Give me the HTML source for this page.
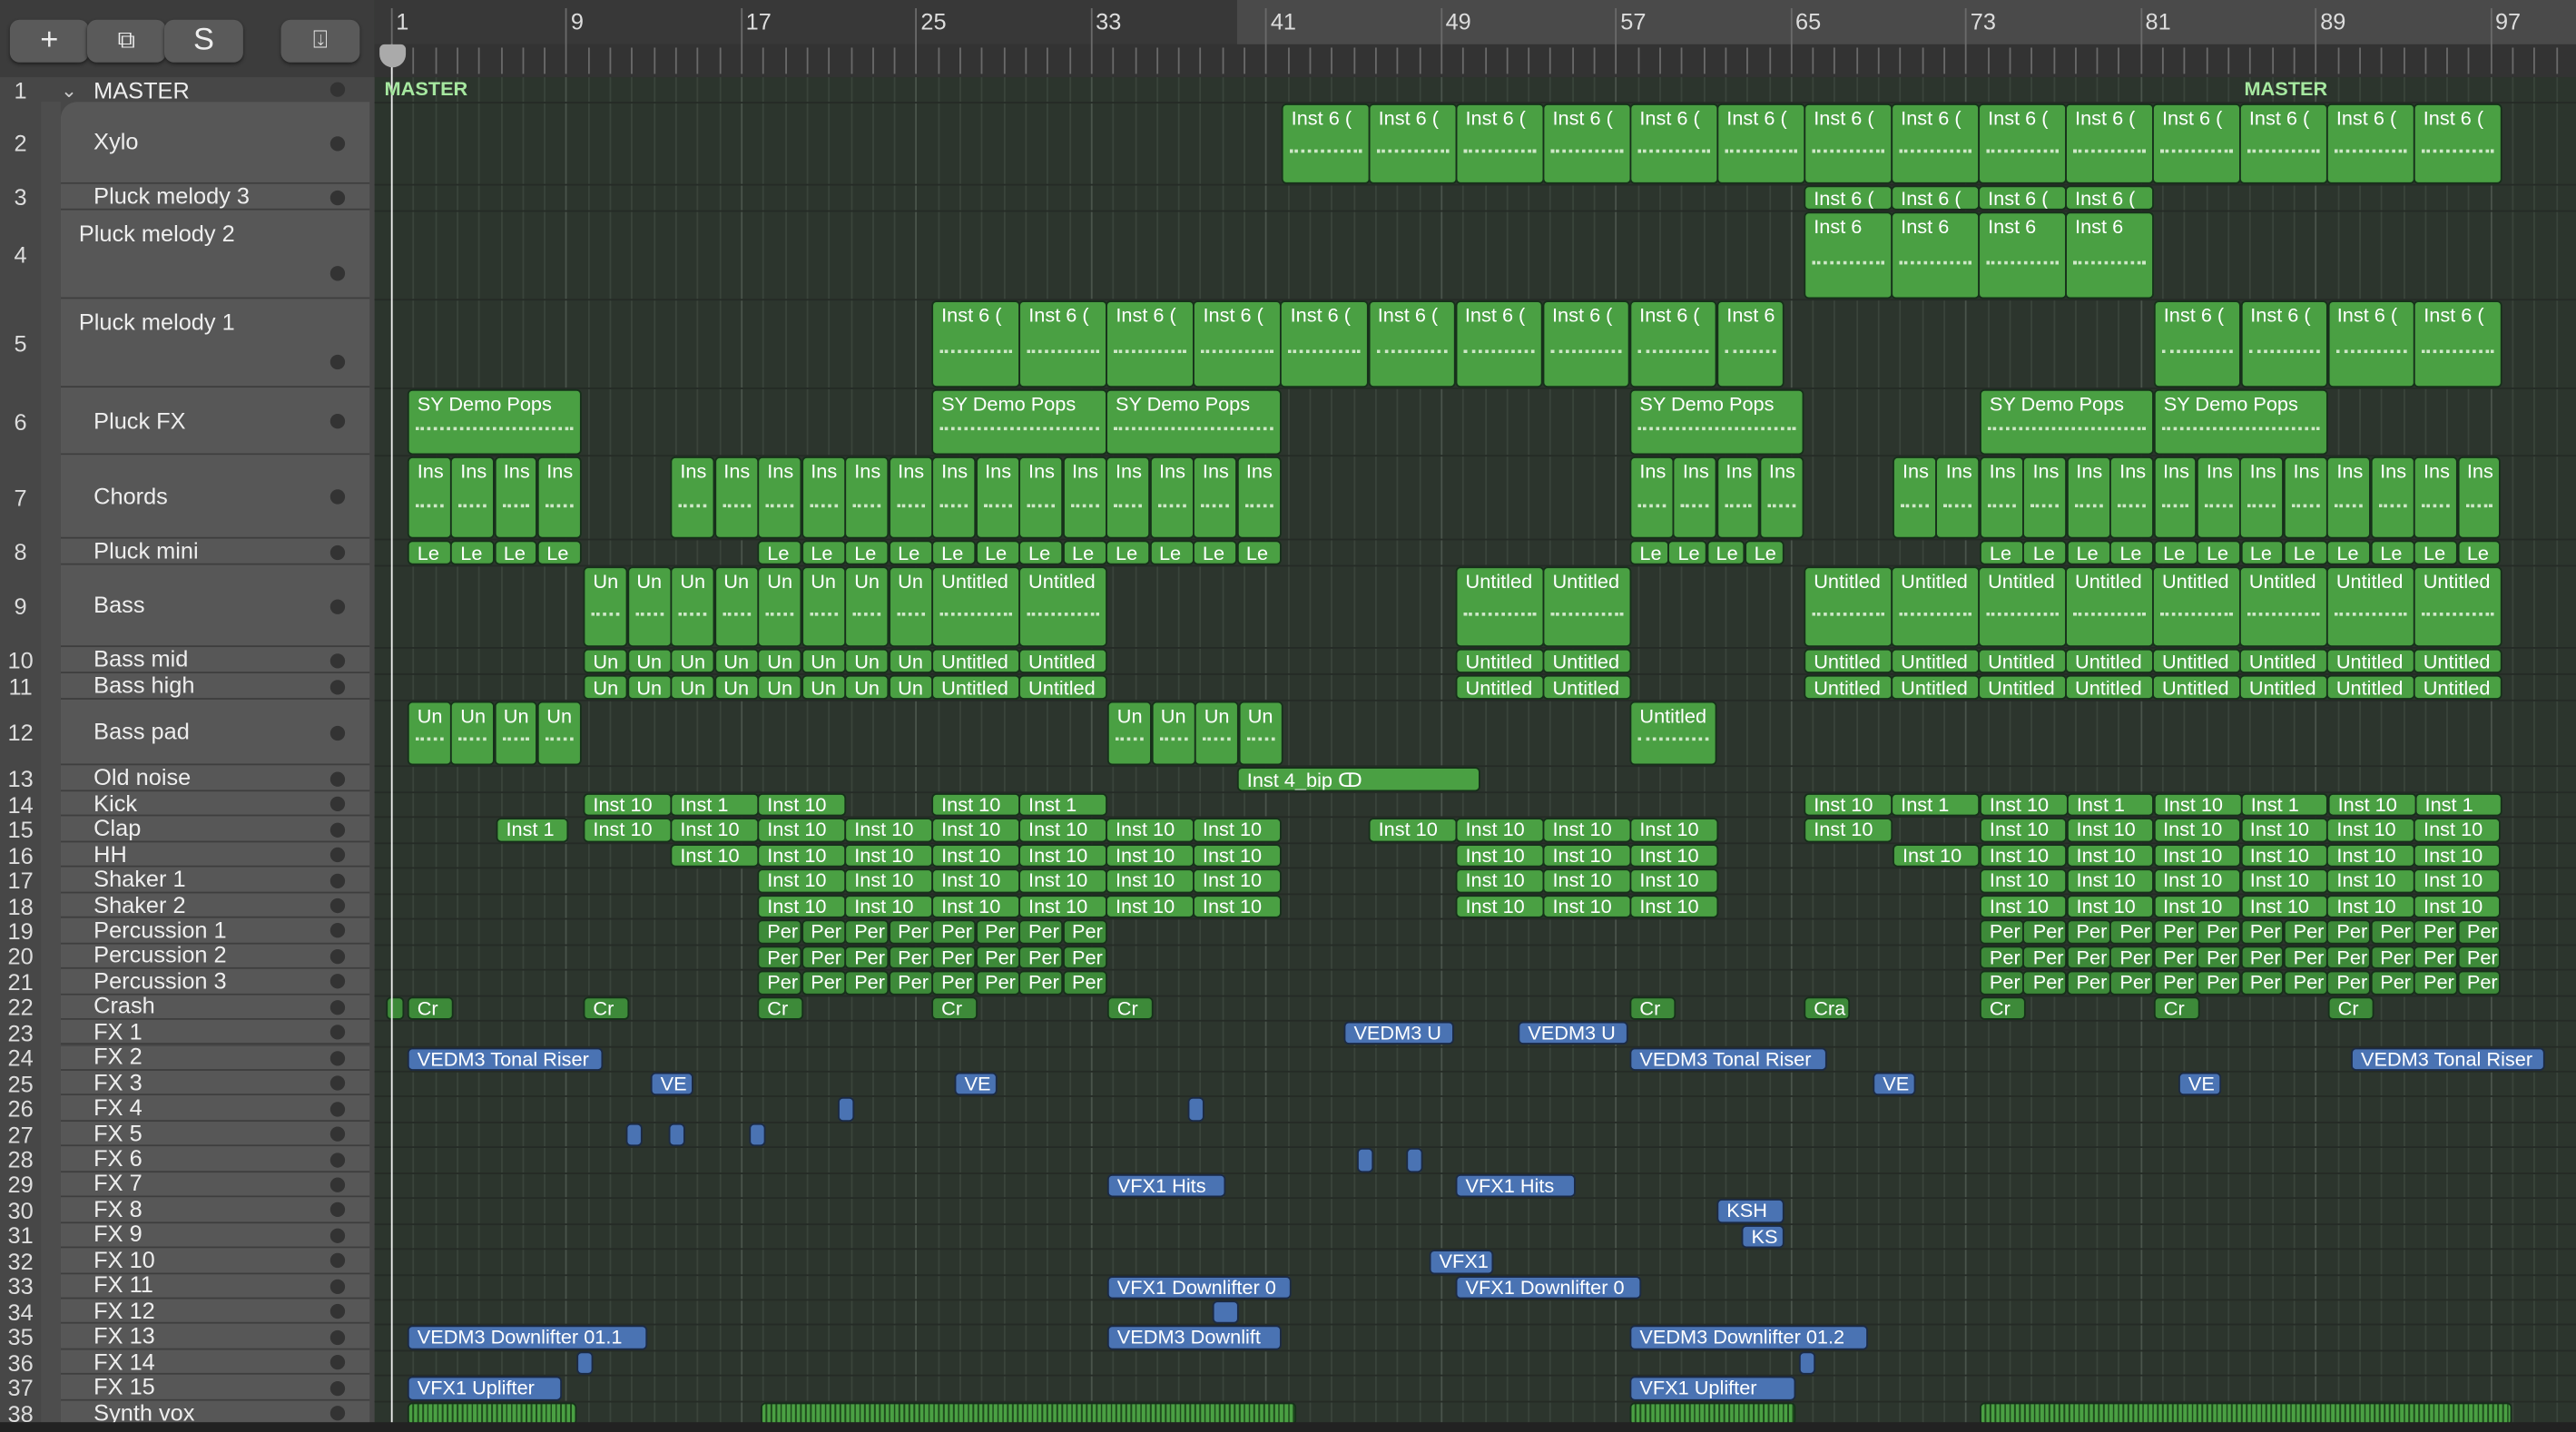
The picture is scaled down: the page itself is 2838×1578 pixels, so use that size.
<!DOCTYPE html>
<html><head><meta charset="utf-8"><style>
html,body{margin:0;padding:0;background:#2a2a2a;overflow:hidden;width:2838px;height:1578px}
#w{position:absolute;left:0;top:0;width:1568px;height:872px;transform:scale(1.81,1.8097);transform-origin:0 0;font-family:"Liberation Sans",sans-serif;background:#2c352d;overflow:hidden}
.a{position:absolute}
.btn{position:absolute;top:12px;width:48px;height:26px;border-radius:6px;background:#5a5a5a;color:#eee;font-size:19px;text-align:center;line-height:26px;box-shadow:0 1px 2px #222}
.num{position:absolute;left:0;width:25px;text-align:center;color:#ddd;font-size:14px}
.hd{position:absolute;left:37px;width:188px;background:#575757;border-bottom:1px solid #3e3e3e;box-sizing:border-box}
.nm{position:absolute;left:20px;color:#eee;font-size:14px;white-space:nowrap}
.dot{position:absolute;left:164px;width:9px;height:9px;border-radius:50%;background:#333}
.r{position:absolute;box-sizing:border-box;border:1px solid #16301a;border-radius:3px;background:#4aa043;color:#fff;font-size:12px;overflow:hidden;white-space:nowrap;padding-left:5px;line-height:13px}
.b{background:#4a73b3;border-color:#1b2a44}
.p{background:#3d8a39}
.g{position:absolute;top:47px;bottom:0;width:1px;background:#3a443b}
.rl{position:absolute;left:228px;right:0;height:1px;background:#252b26}
.tick{position:absolute;top:29px;width:1px;height:16px;background:#6a6a6a}
.rn{position:absolute;top:5px;color:#ddd;font-size:14px}
</style></head><body><div id="w">
<div class="a" style="left:0;top:0;width:228px;height:47px;background:#3c3c3c"></div>
<div class="btn" style="left:6px">+</div>
<div class="btn" style="left:53px;font-size:15px">⧉</div>
<div class="btn" style="left:100px">S</div>
<div class="btn" style="left:171px;font-size:15px">⍗</div>
<div class="a" style="left:228px;top:0;right:0;height:27px;background:#383838"></div>
<div class="a" style="left:753px;top:0;right:0;height:27px;background:#4a4a4a"></div>
<div class="a" style="left:228px;top:27px;right:0;height:20px;background:#333"></div>
<div class="a" style="left:0;top:47px;width:228px;height:825px;background:#474747"></div>
<div class="a" style="left:25px;top:62px;width:12px;height:810px;background:#4d4d4d"></div>
<div id="c"></div>
<div class="a" style="left:238px;top:27px;width:1px;height:845px;background:#eee"></div>
<div class="a" style="left:231px;top:27px;width:16px;height:14px;background:#aaa;border-radius:3px 3px 8px 8px"></div>
<div class="a" style="left:234px;top:47px;color:#a6e8a0;font-size:12px;font-weight:bold">MASTER</div>
<div class="a" style="left:1366px;top:47px;color:#a6e8a0;font-size:12px;font-weight:bold">MASTER</div>
<div class="a" style="left:0;top:866px;width:1568px;height:6px;background:#222"></div>
</div>
<script>
var c=document.getElementById('c'),h='';
for(var i=0;i<=100;i++){var x=238+i*13.31;h+='<div class="g" style="left:'+x+'px;'+(i%8==0?'background:#4a544b':'')+'"></div>';h+='<div class="tick" style="left:'+x+'px;'+(i%8==0?'top:5px;height:40px':'')+'"></div>';if(i%8==0)h+='<div class="rn" style="left:'+(x+3)+'px">'+(i+1)+'</div>';}
var rows=[[47,62,'MASTER'],[62,112,'Xylo'],[112,128,'Pluck melody 3'],[128,182,'Pluck melody 2'],[182,236,'Pluck melody 1'],[236,277,'Pluck FX'],[277,328,'Chords'],[328,344,'Pluck mini'],[344,394,'Bass'],[394,410,'Bass mid'],[410,426,'Bass high'],[426,466,'Bass pad'],[466,482,'Old noise']];
var nm=['Kick','Clap','HH','Shaker 1','Shaker 2','Percussion 1','Percussion 2','Percussion 3','Crash','FX 1','FX 2','FX 3','FX 4','FX 5','FX 6','FX 7','FX 8','FX 9','FX 10','FX 11','FX 12','FX 13','FX 14','FX 15','Synth vox'];
for(var k=0;k<25;k++){var t=482+k*15.45;rows.push([t,t+15.45,nm[k]]);}
rows.forEach(function(r,i){var t=r[0],hh=r[1]-r[0];var n=i+1;
h+='<div class="num" style="top:'+(t+hh/2-8)+'px">'+n+'</div>';
if(i==0){h+='<div class="a" style="left:37px;top:'+(t+1)+'px;color:#ccc;font-size:12px">&#8964;</div><div class="nm" style="left:57px;top:'+(t)+'px">MASTER</div>';}
else{h+='<div class="hd" style="top:'+t+'px;height:'+hh+'px;'+(i==1?'border-radius:10px 0 0 0':'')+'"></div>';
var ty=(i==3||i==4)?t+6:t+hh/2-9,lx=(i==3||i==4)?48:57;h+='<div class="nm" style="left:'+lx+'px;top:'+ty+'px">'+r[2]+'</div>';}
var dy=(i==3||i==4)?r[1]-20:t+hh/2-4.5;h+='<div class="dot" style="left:201px;top:'+dy+'px"></div>';
h+='<div class="rl" style="top:'+r[1]+'px"></div>';});
function R(row,x0,x1,n,txt,cls,pat,st){var t=rows[row-1][0]+1,hh=rows[row-1][1]-rows[row-1][0]-1;var w=(x1-x0)/n;
for(var j=0;j<n;j++){var l=Array.isArray(txt)?txt[j%txt.length]:txt;var inner=l;
if(pat&&hh>30)inner+='<div style="position:absolute;left:4px;right:4px;top:'+(hh*0.55)+'px;height:2px;border-top:2px dotted #cfe8c8"></div>';
h+='<div class="r '+(cls||'')+'" style="left:'+(x0+j*w)+'px;top:'+t+'px;width:'+(w+0.5)+'px;height:'+hh+'px;line-height:'+(hh>20?16:hh-1)+'px;'+(st||'')+'">'+inner+'</div>';}}
R(2,780,1522,14,'Inst 6 (','',1);R(3,1098,1310,4,'Inst 6 (');R(4,1098,1310,4,'Inst 6','',1);
R(5,567,1045,9,'Inst 6 (','',1);R(5,1045,1085,1,'Inst 6','',1);R(5,1311,1522,4,'Inst 6 (','',1);
[[248,353],[567,673],[673,779],[992,1097],[1205,1310],[1311,1416]].forEach(function(a){R(6,a[0],a[1],1,'SY Demo Pops','',1)});
R(7,248,353,4,'Ins','',1);R(7,408,779,14,'Ins','',1);R(7,992,1097,4,'Ins','',1);R(7,1152,1522,14,'Ins','',1);
R(8,248,353,4,'Le');R(8,461,779,12,'Le');R(8,992,1085,4,'Le');R(8,1205,1522,12,'Le');
[9,10,11].forEach(function(q){R(q,355,567,8,'Un','',1);R(q,567,673,2,'Untitled','',1);R(q,886,992,2,'Untitled','',1);R(q,1098,1522,8,'Untitled','',1);});
R(12,248,353,4,'Un','',1);R(12,674,780,4,'Un','',1);R(12,992,1044,1,'Untitled','',1);
R(13,753,900,1,'Inst 4_bip &#x2180;');
[[355,408,'Inst 10'],[408,461,'Inst 1'],[461,514,'Inst 10'],[567,620,'Inst 10'],[620,673,'Inst 1'],[1098,1151,'Inst 10'],[1151,1204,'Inst 1'],[1205,1258,'Inst 10'],[1258,1310,'Inst 1'],[1311,1364,'Inst 10'],[1364,1416,'Inst 1'],[1417,1470,'Inst 10'],[1470,1522,'Inst 1']].forEach(function(a){R(14,a[0],a[1],1,a[2])});
R(15,302,345,1,'Inst 1');R(15,355,779,8,'Inst 10');R(15,833,886,1,'Inst 10');R(15,886,1045,3,'Inst 10');R(15,1098,1151,1,'Inst 10');R(15,1205,1522,6,'Inst 10');
R(16,408,779,7,'Inst 10');R(16,886,1045,3,'Inst 10');R(16,1152,1204,1,'Inst 10');R(16,1205,1522,6,'Inst 10');
[17,18].forEach(function(q){R(q,461,779,6,'Inst 10');R(q,886,1045,3,'Inst 10');R(q,1205,1522,6,'Inst 10');});
[19,20,21].forEach(function(q){R(q,461,673,8,'Per','p');R(q,1205,1522,12,'Per','p');});
R(22,235,245,1,'','p');[248,355,461,567,674,992,1205,1311,1417].forEach(function(x){R(22,x,x+27,1,'Cr','p')});R(22,1098,1125,1,'Cra','p');
R(23,818,884,1,'VEDM3 U','b');R(23,924,990,1,'VEDM3 U','b');
R(24,248,366,1,'VEDM3 Tonal Riser','b');R(24,992,1111,1,'VEDM3 Tonal Riser','b');R(24,1431,1548,1,'VEDM3 Tonal Riser','b');
[396,581,1140,1326].forEach(function(x){R(25,x,x+25,1,'VE','b')});
[510,723].forEach(function(x){R(26,x,x+9,1,'','b')});[381,407,456].forEach(function(x){R(27,x,x+9,1,'','b')});[826,856].forEach(function(x){R(28,x,x+9,1,'','b')});
R(29,674,745,1,'VFX1 Hits','b');R(29,886,958,1,'VFX1 Hits','b');R(30,1045,1085,1,'KSH','b');R(31,1060,1085,1,'KS','b');R(32,870,908,1,'VFX1','b');
R(33,674,785,1,'VFX1 Downlifter 0','b');R(33,886,998,1,'VFX1 Downlifter 0','b');R(34,738,753,1,'','b');
R(35,248,393,1,'VEDM3 Downlifter 01.1','b');R(35,674,779,1,'VEDM3 Downlift','b');R(35,992,1136,1,'VEDM3 Downlifter 01.2','b');
R(36,351,360,1,'','b');R(36,1095,1104,1,'','b');R(37,248,341,1,'VFX1 Uplifter','b');R(37,992,1092,1,'VFX1 Uplifter','b');
var vs='background:repeating-linear-gradient(90deg,#4aa043 0 2px,#1e4a1c 2px 3px)';
R(38,248,350,1,'','',0,vs);R(38,463,788,1,'','',0,vs);R(38,992,1092,1,'','',0,vs);R(38,1205,1528,1,'','',0,vs);
c.innerHTML=h;
</script></body></html>
